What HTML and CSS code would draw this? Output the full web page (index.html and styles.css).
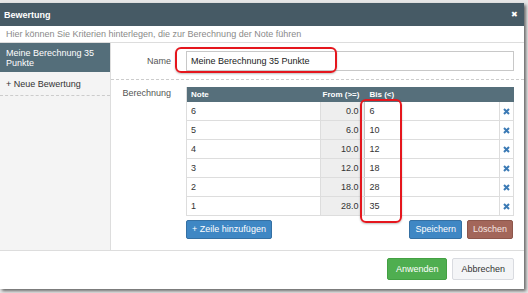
FILE: index.html
```html
<!DOCTYPE html>
<html>
<head>
<meta charset="utf-8">
<link rel="stylesheet" href="styles.css">
</head>
<body>
<div class="dialog">
  <div class="hdr"><span class="title">Bewertung</span><span class="close">✖</span></div>
  <div class="sub">Hier können Sie Kriterien hinterlegen, die zur Berechnung der Note führen</div>
  <div class="body">
    <div class="side">
      <div class="item active">Meine Berechnung 35 Punkte</div>
      <div class="item">+ Neue Bewertung</div>
    </div>
    <div class="main">
      <div class="row name-row">
        <div class="lbl">Name</div>
        <div class="input">Meine Berechnung 35 Punkte</div>
      </div>
      <div class="row calc-row">
        <div class="lbl">Berechnung</div>
        <div class="calc">
          <div class="tbl">
            <div class="tr th"><div class="c note">Note</div><div class="c from">From (&gt;=)</div><div class="c bis">Bis (&lt;)</div><div class="c x"></div></div>
            <div class="tr"><div class="c note">6</div><div class="c from">0.0</div><div class="c bis">6</div><div class="c x"><svg viewBox="0 0 7 7"><path d="M1 1L6 6M6 1L1 6"/></svg></div></div>
            <div class="tr"><div class="c note">5</div><div class="c from">6.0</div><div class="c bis">10</div><div class="c x"><svg viewBox="0 0 7 7"><path d="M1 1L6 6M6 1L1 6"/></svg></div></div>
            <div class="tr"><div class="c note">4</div><div class="c from">10.0</div><div class="c bis">12</div><div class="c x"><svg viewBox="0 0 7 7"><path d="M1 1L6 6M6 1L1 6"/></svg></div></div>
            <div class="tr"><div class="c note">3</div><div class="c from">12.0</div><div class="c bis">18</div><div class="c x"><svg viewBox="0 0 7 7"><path d="M1 1L6 6M6 1L1 6"/></svg></div></div>
            <div class="tr"><div class="c note">2</div><div class="c from">18.0</div><div class="c bis">28</div><div class="c x"><svg viewBox="0 0 7 7"><path d="M1 1L6 6M6 1L1 6"/></svg></div></div>
            <div class="tr"><div class="c note">1</div><div class="c from">28.0</div><div class="c bis">35</div><div class="c x"><svg viewBox="0 0 7 7"><path d="M1 1L6 6M6 1L1 6"/></svg></div></div>
          </div>
          <div class="actions">
            <div class="btn blue add">+ Zeile hinzufügen</div>
            <div class="spacer"></div>
            <div class="btn blue">Speichern</div>
            <div class="btn brown">Löschen</div>
          </div>
        </div>
      </div>
    </div>
  </div>
  <div class="foot">
    <div class="btn green big">Anwenden</div>
    <div class="btn light big">Abbrechen</div>
  </div>
  <div class="mark mark-name"></div>
  <div class="mark mark-bis"></div>
</div>
</body>
</html>
```
FILE: styles.css
```css
* { box-sizing: border-box; }
html, body { margin: 0; padding: 0; }
body {
  background: #e6e6e6;
  font-family: "Liberation Sans", Arial, sans-serif;
  font-size: 9px;
  color: #333;
  width: 528px;
  height: 293px;
  overflow: hidden;
}
.dialog {
  position: relative;
  margin-top: 3px;
  width: 524px;
  height: 286px;
  background: #fff;
  box-shadow: 2px 2px 3px rgba(0,0,0,0.55);
  display: flex;
  flex-direction: column;
}
.hdr {
  height: 23px;
  background: #465a65;
  color: #fff;
  display: flex;
  align-items: center;
  justify-content: space-between;
  padding: 0 6px 0 4px;
}
.title { font-weight: bold; }
.close { font-size: 8px; line-height: 1; }
.sub {
  height: 17px;
  line-height: 16px;
  padding-left: 6px;
  color: #8a8a8a;
  border-bottom: 1px solid #ddd;
}
.body {
  height: 208px;
  display: flex;
  border-bottom: 1px solid #ddd;
}
.side {
  width: 112px;
  background: #f4f4f4;
  border-right: 1px solid #ddd;
}
.item {
  padding: 7px 6px 6px;
  line-height: 10px;
  border-bottom: 1px dashed #ccc;
}
.item.active {
  background: #546e7a;
  color: #fff;
  padding: 5px 6px 4px;
  line-height: 10px;
  border-bottom: none;
}
.main {
  flex: 1;
  padding: 8px 10px 0 10px;
}
.row { display: flex; gap: 15px; }
.lbl {
  width: 50px;
  text-align: right;
  color: #555;
}
.name-row {
  align-items: center;
  padding-bottom: 8px;
  border-bottom: 1px dashed #ccc;
  margin: 0 -10px 0 -10px;
  padding-left: 10px;
  padding-right: 10px;
}
.input {
  flex: 1;
  height: 20px;
  border: 1px solid #c8c8c8;
  line-height: 18px;
  padding-left: 4px;
  color: #222;
}
.calc-row { padding-top: 7px; }
.calc-row .lbl { line-height: 10px; padding-top: 1px; }
.calc { flex: 1; }
.tbl {
  width: 328px;
  border-left: 1px solid #ddd;
}
.tr {
  display: flex;
  height: 19px;
  border-bottom: 1px solid #ddd;
}
.tr.th {
  height: 15px;
  background: #566f7b;
  color: #fff;
  font-weight: bold;
  font-size: 8px;
  border-bottom: none;
}
.c { display: flex; align-items: center; }
.note { width: 134px; padding-left: 4px; border-right: 1px solid #ddd; }
.from { width: 45px; justify-content: flex-end; padding-right: 6px; background: #eee; border-right: 1px solid #c4c4c4; }
.bis { width: 135px; padding-left: 4px; border-right: 1px solid #ddd; }
.x { width: 14px; justify-content: center; border-right: 1px solid #ddd; }
.th .c { border-right: none; background: none; }
.x svg { width: 7px; height: 7px; }
.x path { stroke: #3b7ab5; stroke-width: 2; fill: none; }
.actions {
  display: flex;
  gap: 5px;
  margin-top: 4px;
  width: 327px;
}
.spacer { flex: 1; }
.btn {
  height: 19px;
  line-height: 17px;
  padding: 0 5px;
  border: 1px solid transparent;
  border-radius: 2px;
  color: #fff;
  white-space: nowrap;
}
.blue { background: #3f87c4; border-color: #3570a3; }
.brown { background: #a3665a; border-color: #8d564b; color: #f6e6e3; }
.add { width: 86px; text-align: center; }
.foot {
  flex: 1;
  display: flex;
  justify-content: flex-end;
  gap: 5px;
  padding: 7px 10px 0 0;
}
.big { height: 22px; line-height: 20px; padding: 0 8px; }
.green { background: #4fae50; border-color: #43a043; }
.light { background: #f4f5f7; border-color: #d9dbe0; color: #333; }
.mark {
  position: absolute;
  border: 2px solid #e5161d;
  border-radius: 6px;
  box-shadow: 0 1px 2px rgba(0,0,0,0.25);
}
.mark-name { left: 175px; top: 44px; width: 162px; height: 26px; }
.mark-bis { left: 360px; top: 96px; width: 42px; height: 124px; }
```
